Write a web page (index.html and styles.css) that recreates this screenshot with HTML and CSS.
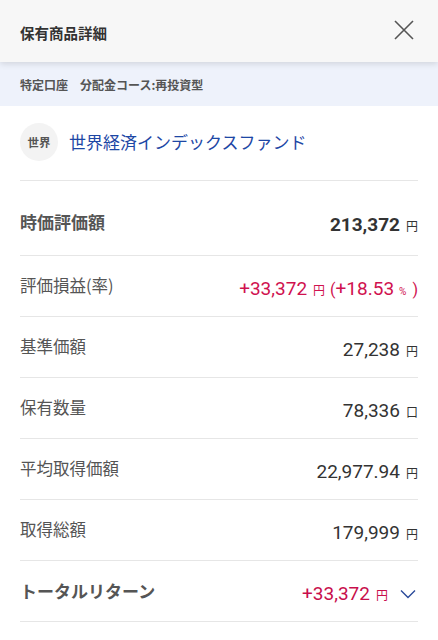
FILE: index.html
```html
<!DOCTYPE html>
<html lang="ja">
<head>
    <meta charset="UTF-8">
    <meta name="viewport" content="width=device-width, initial-scale=1.0">
    <title>保有商品詳細</title>
    <link rel="stylesheet" href="styles.css">
</head>
<body>

    <header class="topbar">
        <div class="title">保有商品詳細</div>
        <button class="close" aria-label="閉じる">
            <svg width="20" height="20" viewBox="0 0 20 20">
                <path d="M1 1 L19 19 M19 1 L1 19" stroke="#555" stroke-width="1.6" fill="none"/>
            </svg>
        </button>
    </header>

    <div class="account">
        <span>特定口座</span>
        <span>分配金コース:再投資型</span>
    </div>

    <div class="container">
        <div class="fund">
            <div class="badge">世界</div>
            <div class="fund-name">世界経済インデックスファンド</div>
        </div>

        <div class="row row-main">
            <div class="label strong">時価評価額</div>
            <div class="value strong">213,372<span class="unit">円</span></div>
        </div>

        <div class="row">
            <div class="label">評価損益(率)</div>
            <div class="value plus">+33,372<span class="unit">円</span><span class="paren">(</span>+18.53<span class="unit pct">%</span><span class="paren">)</span></div>
        </div>

        <div class="row">
            <div class="label">基準価額</div>
            <div class="value">27,238<span class="unit">円</span></div>
        </div>

        <div class="row">
            <div class="label">保有数量</div>
            <div class="value">78,336<span class="unit">口</span></div>
        </div>

        <div class="row">
            <div class="label">平均取得価額</div>
            <div class="value">22,977.94<span class="unit">円</span></div>
        </div>

        <div class="row">
            <div class="label">取得総額</div>
            <div class="value">179,999<span class="unit">円</span></div>
        </div>

        <div class="row">
            <div class="label strong">トータルリターン</div>
            <div class="value plus total">+33,372<span class="unit">円</span>
                <svg class="chevron" width="16" height="10" viewBox="0 0 16 10">
                    <path d="M1 1.5 L8 8.5 L15 1.5" stroke="#2b4a9a" stroke-width="1.4" fill="none"/>
                </svg>
            </div>
        </div>
    </div>

</body>
</html>
```

FILE: styles.css
```css
* {
    margin: 0;
    padding: 0;
    box-sizing: border-box;
}

body {
    font-family: Roboto, "Noto Sans CJK JP", sans-serif;
    background-color: #ffffff;
    color: #333;
}

.topbar {
    height: 62px;
    padding: 0 20px;
    background-color: #f7f7f7;
    display: flex;
    justify-content: space-between;
    align-items: center;
    box-shadow: 0 2px 6px rgba(0, 0, 0, 0.12);
    position: relative;
    z-index: 1;
}

.topbar .title {
    font-family: "Noto Sans CJK JP", sans-serif;
    font-size: 14.5px;
    font-weight: bold;
    color: #333;
    padding-top: 2px;
}

.close {
    background: none;
    border: none;
    width: 20px;
    height: 20px;
    margin-right: 4px;
    margin-bottom: 2px;
    display: flex;
}

.account {
    height: 44px;
    padding: 0 20px;
    background-color: #eef2fb;
    display: flex;
    align-items: center;
    gap: 12px;
    font-family: "Noto Sans CJK JP", sans-serif;
    font-size: 12px;
    font-weight: bold;
    color: #555;
}

.container {
    padding: 0 20px;
}

.fund {
    height: 75px;
    display: flex;
    align-items: center;
    gap: 11px;
    border-bottom: 1px solid #e6e6e6;
    padding-bottom: 3px;
}

.badge {
    width: 38px;
    height: 38px;
    border-radius: 50%;
    background-color: #f3f3f3;
    display: flex;
    align-items: center;
    justify-content: center;
    font-family: "Noto Sans CJK JP", sans-serif;
    font-size: 11.5px;
    font-weight: bold;
    color: #555;
}

.fund-name {
    font-family: "Noto Sans CJK JP", sans-serif;
    font-size: 17px;
    color: #1d47a5;
}

.row {
    height: 61px;
    display: flex;
    justify-content: space-between;
    align-items: center;
    border-bottom: 1px solid #e6e6e6;
}

.row-main {
    height: 75px;
    padding-top: 8px;
}

.label {
    font-family: "Noto Sans CJK JP", sans-serif;
    font-size: 16.5px;
    color: #555;
    padding-bottom: 2px;
}

.label.strong {
    font-size: 17px;
    font-weight: bold;
}

.value {
    font-size: 19px;
    color: #333;
    display: flex;
    align-items: baseline;
    padding-top: 4px;
}

.value.strong {
    font-weight: bold;
}

.unit {
    font-family: "Noto Sans CJK JP", sans-serif;
    font-size: 12px;
    font-weight: normal;
    margin-left: 6px;
}

.value.plus {
    color: #d0124f;
}

.paren {
    font-size: 16px;
    margin-left: 5px;
}

.unit.pct {
    font-family: Roboto, sans-serif;
    font-size: 10px;
    margin-left: 5px;
    margin-right: 1px;
}

.value.total {
    color: #c80e4c;
    align-items: center;
}

.value.total .unit {
    margin-top: 2px;
}

.chevron {
    margin-left: 12px;
    margin-right: 2px;
    margin-top: 2px;
}
```
